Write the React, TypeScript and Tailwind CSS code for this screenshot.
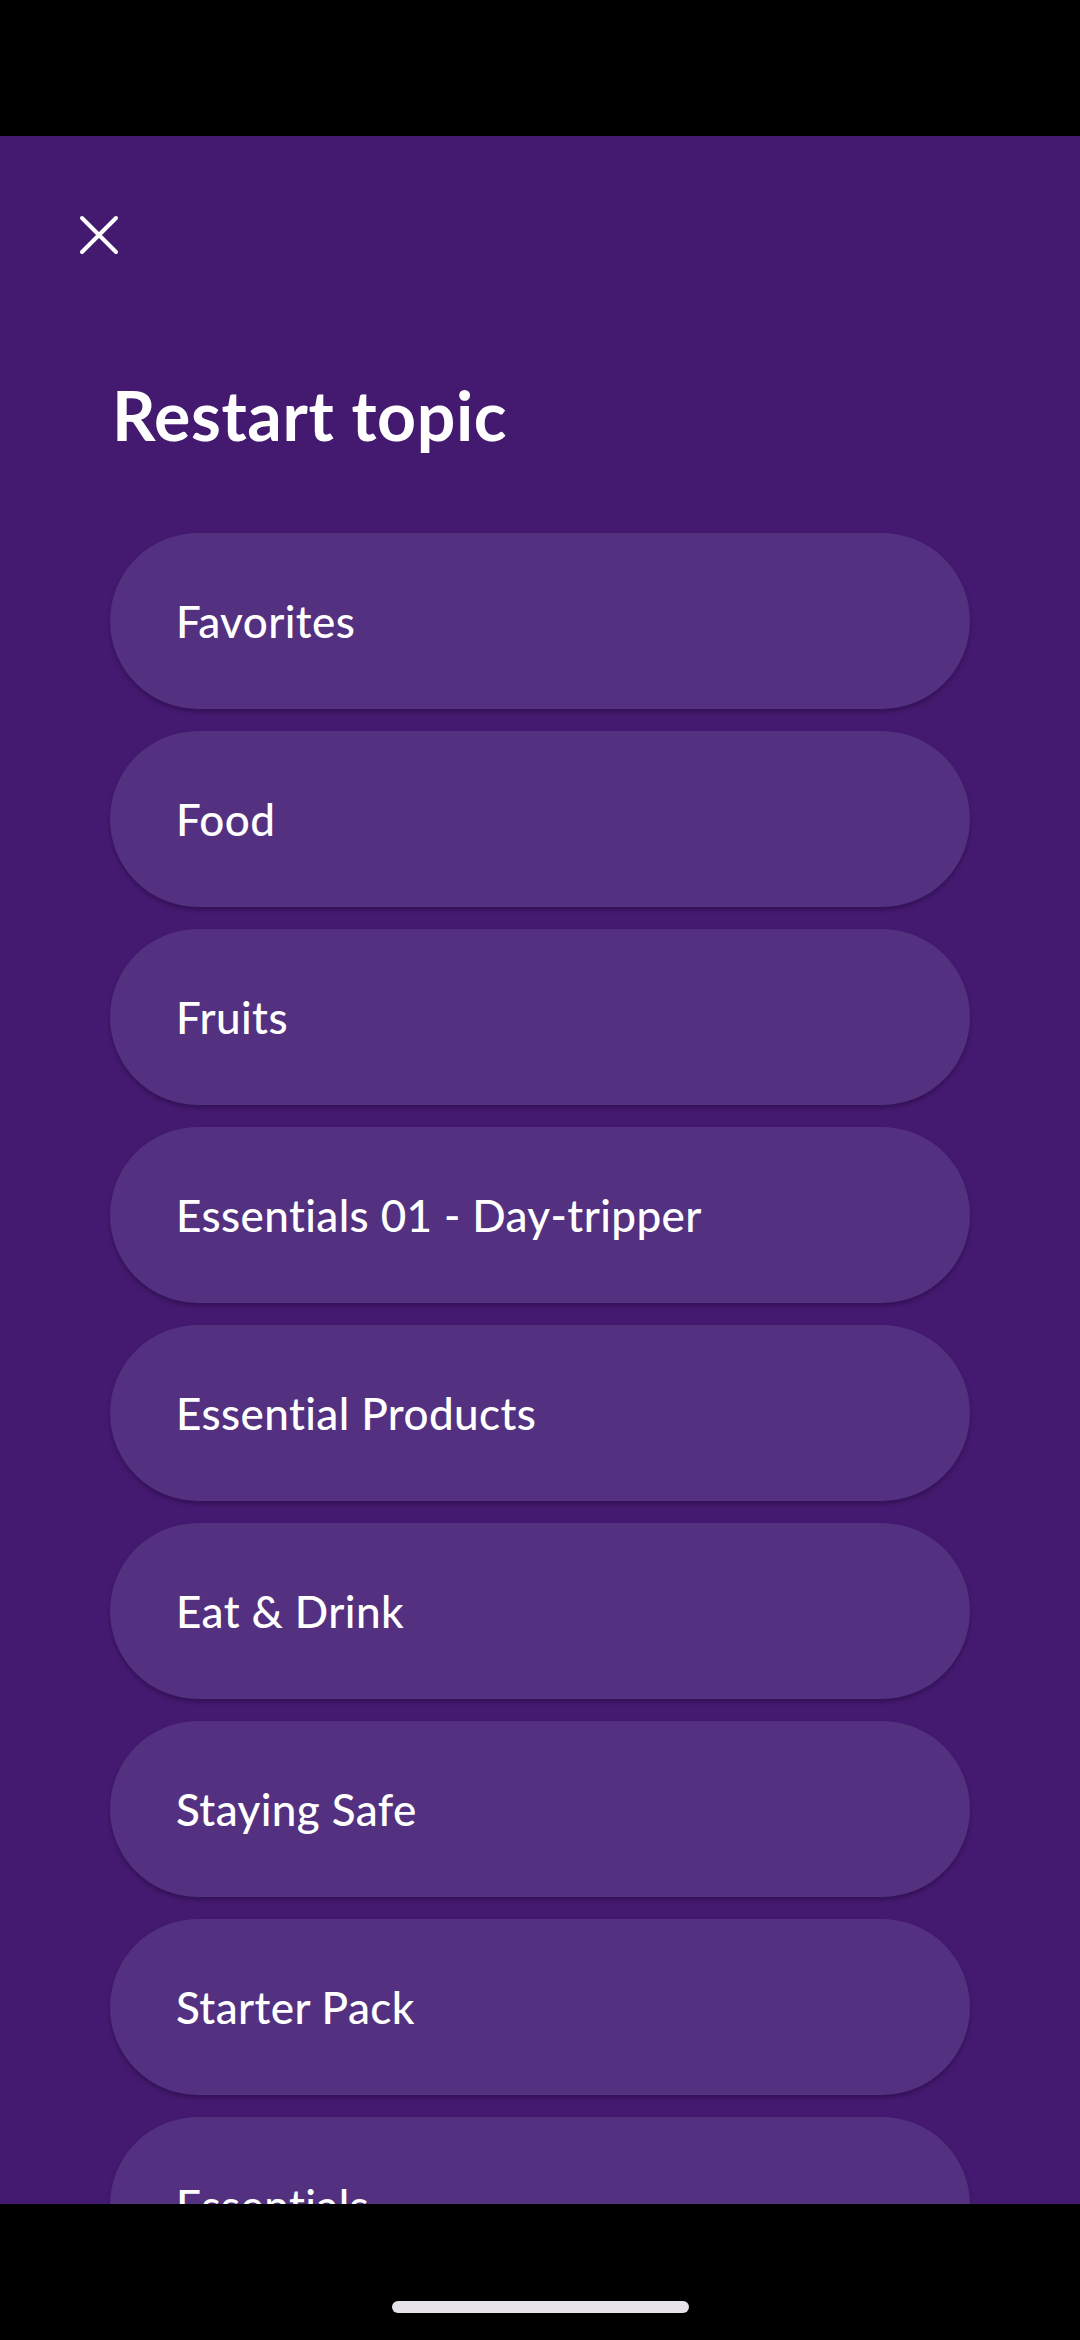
import React from "react";

const topics = [
  "Favorites",
  "Food",
  "Fruits",
  "Essentials 01 - Day-tripper",
  "Essential Products",
  "Eat & Drink",
  "Staying Safe",
  "Starter Pack",
  "Essentials",
];

export default function App() {
  return (
    <div
      className="w-[1080px] h-[2340px] bg-black flex flex-col overflow-hidden"
      style={{ fontFamily: "Lato, 'Noto Sans', sans-serif" }}
    >
      <div className="h-[136px] shrink-0 bg-black" />
      <div className="h-[2068px] shrink-0 bg-[#441a70] overflow-hidden flex flex-col">
        <div className="pl-[79px] pt-[79px]">
          <svg width="40" height="40" viewBox="0 0 40 40" fill="none">
            <path d="M3 3 L37 37 M37 3 L3 37" stroke="white" strokeWidth="4" strokeLinecap="round" />
          </svg>
        </div>
        <h1 className="pl-[112px] mt-[127px] text-[68px] leading-[66px] font-bold text-white tracking-[0.6px]">
          Restart topic
        </h1>
        <div className="mt-[85px] px-[110px] flex flex-col gap-[22px]">
          {topics.map((t) => (
            <div
              key={t}
              className="h-[176px] shrink-0 rounded-full bg-[#533180] shadow-[0_3px_4px_rgba(20,0,40,0.35)] flex items-center pl-[66px]"
            >
              <span className="text-white text-[44px] leading-none font-medium tracking-[0.4px]">{t}</span>
            </div>
          ))}
        </div>
      </div>
      <div className="flex-1 bg-black flex justify-center">
        <div className="mt-[97px] w-[297px] h-[12px] rounded-full bg-[#e6e2ea]" />
      </div>
    </div>
  );
}
